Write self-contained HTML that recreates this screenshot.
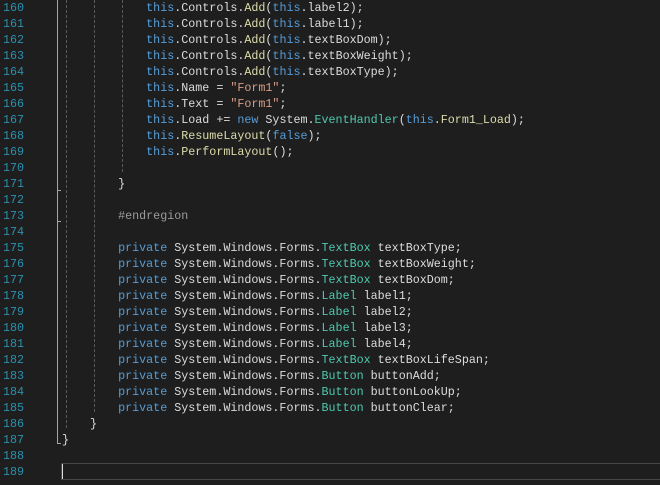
<!DOCTYPE html><html><head><style>
body{margin:0;background:#1e1e1e;width:660px;height:485px;overflow:hidden;position:relative;font-family:"Liberation Mono",monospace;font-size:11.7px;}
.l{position:absolute;left:0;height:16px;line-height:16px;white-space:pre;color:#dcdcdc;}
.n{position:absolute;left:3px;width:22px;color:#2b91af;}
.c{position:absolute;left:62px;}
.k{color:#569cd6}.t{color:#4ec9b0}.m{color:#dcdcaa}.s{color:#d69d85}.p{color:#9b9b9b}
.g{position:absolute;width:0;border-left:1px dashed #5a5a5a;}
.o{position:absolute;background:#a5a5a5;}
</style></head><body>
<div class="o" style="left:57px;top:0;width:1px;height:191px"></div>
<div class="o" style="left:57px;top:190px;width:4px;height:1px"></div>
<div class="o" style="left:57px;top:191px;width:1px;height:31px"></div>
<div class="o" style="left:57px;top:221px;width:4px;height:1px"></div>
<div class="o" style="left:57px;top:222px;width:1px;height:222px"></div>
<div class="o" style="left:57px;top:443px;width:4px;height:1px"></div>
<div class="g" style="left:66px;top:0;height:428px"></div>
<div class="g" style="left:94px;top:0;height:412px"></div>
<div class="g" style="left:122px;top:0;height:172px"></div>
<div style="position:absolute;left:61px;top:463px;width:600px;height:15px;border:1px solid #464646;border-right:none"></div>
<div style="position:absolute;left:62px;top:464px;width:1px;height:15px;background:#dcdcdc"></div>
<div class="l" style="top:0"><span class="n">160</span><span class="c">            <span class="k">this</span>.Controls.<span class="m">Add</span>(<span class="k">this</span>.label2);</span></div>
<div class="l" style="top:16px"><span class="n">161</span><span class="c">            <span class="k">this</span>.Controls.<span class="m">Add</span>(<span class="k">this</span>.label1);</span></div>
<div class="l" style="top:32px"><span class="n">162</span><span class="c">            <span class="k">this</span>.Controls.<span class="m">Add</span>(<span class="k">this</span>.textBoxDom);</span></div>
<div class="l" style="top:48px"><span class="n">163</span><span class="c">            <span class="k">this</span>.Controls.<span class="m">Add</span>(<span class="k">this</span>.textBoxWeight);</span></div>
<div class="l" style="top:64px"><span class="n">164</span><span class="c">            <span class="k">this</span>.Controls.<span class="m">Add</span>(<span class="k">this</span>.textBoxType);</span></div>
<div class="l" style="top:80px"><span class="n">165</span><span class="c">            <span class="k">this</span>.Name = <span class="s">"Form1"</span>;</span></div>
<div class="l" style="top:96px"><span class="n">166</span><span class="c">            <span class="k">this</span>.Text = <span class="s">"Form1"</span>;</span></div>
<div class="l" style="top:112px"><span class="n">167</span><span class="c">            <span class="k">this</span>.Load += <span class="k">new</span> System.<span class="t">EventHandler</span>(<span class="k">this</span>.<span class="m">Form1_Load</span>);</span></div>
<div class="l" style="top:128px"><span class="n">168</span><span class="c">            <span class="k">this</span>.<span class="m">ResumeLayout</span>(<span class="k">false</span>);</span></div>
<div class="l" style="top:144px"><span class="n">169</span><span class="c">            <span class="k">this</span>.<span class="m">PerformLayout</span>();</span></div>
<div class="l" style="top:160px"><span class="n">170</span></div>
<div class="l" style="top:176px"><span class="n">171</span><span class="c">        }</span></div>
<div class="l" style="top:192px"><span class="n">172</span></div>
<div class="l" style="top:208px"><span class="n">173</span><span class="c">        <span class="p">#endregion</span></span></div>
<div class="l" style="top:224px"><span class="n">174</span></div>
<div class="l" style="top:240px"><span class="n">175</span><span class="c">        <span class="k">private</span> System.Windows.Forms.<span class="t">TextBox</span> textBoxType;</span></div>
<div class="l" style="top:256px"><span class="n">176</span><span class="c">        <span class="k">private</span> System.Windows.Forms.<span class="t">TextBox</span> textBoxWeight;</span></div>
<div class="l" style="top:272px"><span class="n">177</span><span class="c">        <span class="k">private</span> System.Windows.Forms.<span class="t">TextBox</span> textBoxDom;</span></div>
<div class="l" style="top:288px"><span class="n">178</span><span class="c">        <span class="k">private</span> System.Windows.Forms.<span class="t">Label</span> label1;</span></div>
<div class="l" style="top:304px"><span class="n">179</span><span class="c">        <span class="k">private</span> System.Windows.Forms.<span class="t">Label</span> label2;</span></div>
<div class="l" style="top:320px"><span class="n">180</span><span class="c">        <span class="k">private</span> System.Windows.Forms.<span class="t">Label</span> label3;</span></div>
<div class="l" style="top:336px"><span class="n">181</span><span class="c">        <span class="k">private</span> System.Windows.Forms.<span class="t">Label</span> label4;</span></div>
<div class="l" style="top:352px"><span class="n">182</span><span class="c">        <span class="k">private</span> System.Windows.Forms.<span class="t">TextBox</span> textBoxLifeSpan;</span></div>
<div class="l" style="top:368px"><span class="n">183</span><span class="c">        <span class="k">private</span> System.Windows.Forms.<span class="t">Button</span> buttonAdd;</span></div>
<div class="l" style="top:384px"><span class="n">184</span><span class="c">        <span class="k">private</span> System.Windows.Forms.<span class="t">Button</span> buttonLookUp;</span></div>
<div class="l" style="top:400px"><span class="n">185</span><span class="c">        <span class="k">private</span> System.Windows.Forms.<span class="t">Button</span> buttonClear;</span></div>
<div class="l" style="top:416px"><span class="n">186</span><span class="c">    }</span></div>
<div class="l" style="top:432px"><span class="n">187</span><span class="c">}</span></div>
<div class="l" style="top:448px"><span class="n">188</span></div>
<div class="l" style="top:464px"><span class="n">189</span></div>
</body></html>
